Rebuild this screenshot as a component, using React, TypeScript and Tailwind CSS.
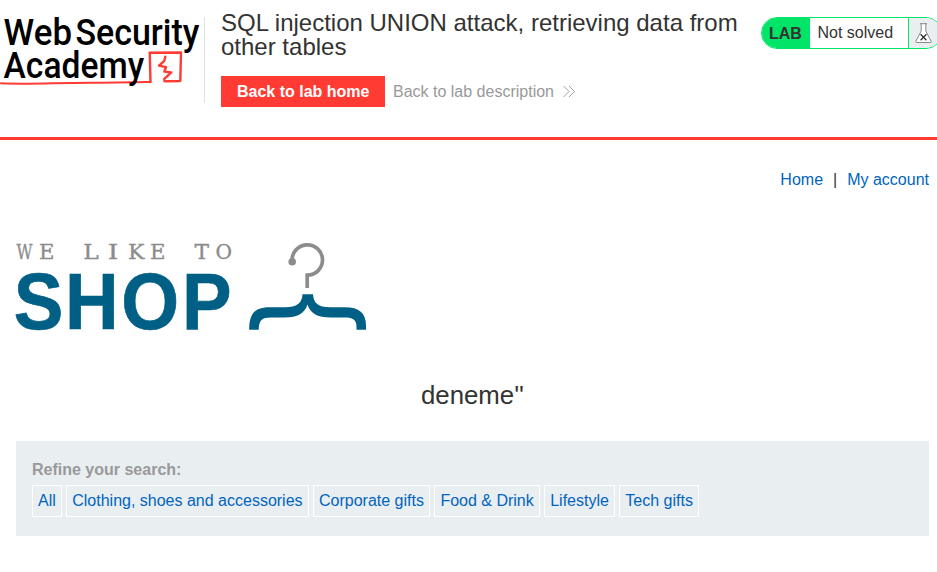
import React from "react";

const categories = [
  "All",
  "Clothing, shoes and accessories",
  "Corporate gifts",
  "Food & Drink",
  "Lifestyle",
  "Tech gifts",
];

const tagline: [string, number, number][] = [
  ["W", 16.5, 16],
  ["E", 39, 15.5],
  ["L", 83.3, 15.5],
  ["I", 107.7, 10.5],
  ["K", 128, 16.5],
  ["E", 150, 15.5],
  ["T", 194.5, 14.5],
  ["O", 215.5, 16.5],
];

function AcademyLogo() {
  return (
    <svg className="block h-[90px] w-[204px] shrink-0" viewBox="0 0 204 90" role="img" aria-label="Web Security Academy">
      <g fill="#000" fontFamily="Roboto, sans-serif" fontWeight="500" fontSize="36.5">
        <text x="3.6" y="45.2" textLength="68.4" lengthAdjust="spacingAndGlyphs">Web</text>
        <text x="75.4" y="45.2" textLength="124" lengthAdjust="spacingAndGlyphs">Security</text>
      </g>
      <g fill="none" stroke="#ff3b34" strokeLinejoin="round" strokeLinecap="round">
        <path d="M1 83.3 C30 84.5 60 82.5 95 82.7 S135 81.7 150.3 82" strokeWidth="2" />
        <path d="M150.5 82 L149.7 52.8 L181 52.5 L180.3 81 L164.5 81.2 L164.3 78.8 L171.3 72.4 L164.3 71.6 L166 67.2 L159 65.6 L164.3 60.8 L165.3 56.7" strokeWidth="2.4" />
      </g>
      <text x="3.6" y="78.1" fill="#000" fontFamily="Roboto, sans-serif" fontWeight="500" fontSize="36.5" textLength="140.5" lengthAdjust="spacingAndGlyphs">Academy</text>
    </svg>
  );
}

function ShopLogo() {
  return (
    <svg className="block h-[100px] w-[380px]" viewBox="0 235 380 100" role="img" aria-label="We like to shop">
      <g fill="#8c8c8c" stroke="#8c8c8c" strokeWidth="0.35" fontFamily="'DejaVu Serif', serif" fontSize="21">
        {tagline.map(([letter, x, width]) => (
          <text key={x} x={x} y="258.7" textLength={width} lengthAdjust="spacingAndGlyphs">{letter}</text>
        ))}
      </g>
      <text transform="scale(0.93 1)" x="14.9 70 130.3 195.6" y="329.5" fill="#005f85" stroke="#005f85" strokeWidth="0.7" fontFamily="'Liberation Sans', Arial, sans-serif" fontWeight="700" fontSize="80">SHOP</text>
      <path d="M292.2 261 A15.2 15.2 0 1 1 307.2 274.5 V287.3" fill="none" stroke="#8c8c8c" strokeWidth="3.7" transform="translate(0 .7)" />
      <circle cx="292.2" cy="261.7" r="3.8" fill="#8c8c8c" />
      <path d="M302.5 294.2 H313 C313.5 303 318 307.2 330 307.3 H345 C359 307.3 366 313 366 326 V329.8 H356.5 V327 C356.5 320 353.5 317.5 345 317.5 H331 C317 317.5 310 313 307.5 304.5 C305 313 298 317.5 284 317.5 H271 C262 317.5 259 320 258.7 329.8 H249.2 C249.2 313 255 307.3 270 307.3 H285 C297 307.2 302 303 302.5 294.2 Z" fill="#005f85" />
    </svg>
  );
}

function Flask() {
  return (
    <svg className="h-[21px] w-[17px] shrink-0" viewBox="0 0 17 21" fill="none">
      <path d="M5 .7 H12 M6.2 .7 V8 L.9 18.2 Q.4 19.5 1.6 19.5 H15.4 Q16.6 19.5 16.1 18.2 L10.8 8 V.7" fill="#fff" stroke="#888" strokeWidth="1" />
      <path d="M5.6 11.3 L11.4 17.3 M11.4 11.3 L5.6 17.3" stroke="#333" strokeWidth="1.3" />
    </svg>
  );
}

export default function App() {
  return (
    <div className="h-[572px] w-full overflow-hidden bg-white font-['Liberation_Sans',Arial,sans-serif] text-base text-[#333332]">
      <header className="flex h-[140px] items-start border-b-[3px] border-[#ff3b34]">
        <AcademyLogo />
        <div className="mt-[17px] h-[86px] w-px shrink-0 bg-[#e2e2e2]" />
        <div className="ml-4 w-[540px] shrink-0 pt-[11px]">
          <h2 className="w-[530px] text-2xl leading-6">SQL injection UNION attack, retrieving data from other tables</h2>
          <div className="mt-[17px] flex h-[31px] items-center">
            <a className="flex h-[31px] w-[164px] items-center bg-[#ff3b34] pl-4 font-bold text-white">Back to lab home</a>
            <a className="ml-2 flex items-center text-[#999]">
              Back to lab description
              <svg className="ml-[9px] h-3 w-3" viewBox="0 0 12 12" fill="none" stroke="#999" strokeWidth="0.9">
                <path d="M.5 0 L6 5.5 L.5 11 M6 0 L11.5 5.5 L6 11" />
              </svg>
            </a>
          </div>
        </div>
        <div className="mt-[17px] flex h-8 w-[181px] shrink-0 overflow-hidden rounded-full border border-[#00e568]">
          <div className="flex w-12 shrink-0 items-center bg-[#00e568] pl-[7px] pt-px font-bold">LAB</div>
          <div className="w-[98px] shrink-0 pl-[7.5px] leading-[30px]">Not solved</div>
          <div className="flex grow items-center border-l border-[#00e568] bg-[#e9eef1] pl-[6px] pt-px"><Flask /></div>
        </div>
      </header>

      <nav className="mt-7 flex h-6 items-center justify-end pr-2 leading-6">
        <a className="text-[#0064c0]">Home</a>
        <span className="px-[10px]">|</span>
        <a className="text-[#0064c0]">My account</a>
      </nav>

      <div className="mt-[43px]">
        <ShopLogo />
      </div>

      <h1 className="ml-4 mr-2 mt-[45px] h-[30px] text-center text-[25.8px] leading-[30px]">deneme&#39;&#39;</h1>

      <section className="ml-4 mr-2 mt-[31px] h-[95px] bg-[#e9eef1] px-4 pt-[17px]">
        <div className="h-[27px] font-bold leading-[23px] text-[#999]">Refine your search:</div>
        <div className="flex gap-[4.45px]">
          {categories.map((category) => (
            <a key={category} className="h-8 whitespace-nowrap border border-white px-[5px] leading-[30px] text-[#0064c0]">{category}</a>
          ))}
        </div>
      </section>
    </div>
  );
}
